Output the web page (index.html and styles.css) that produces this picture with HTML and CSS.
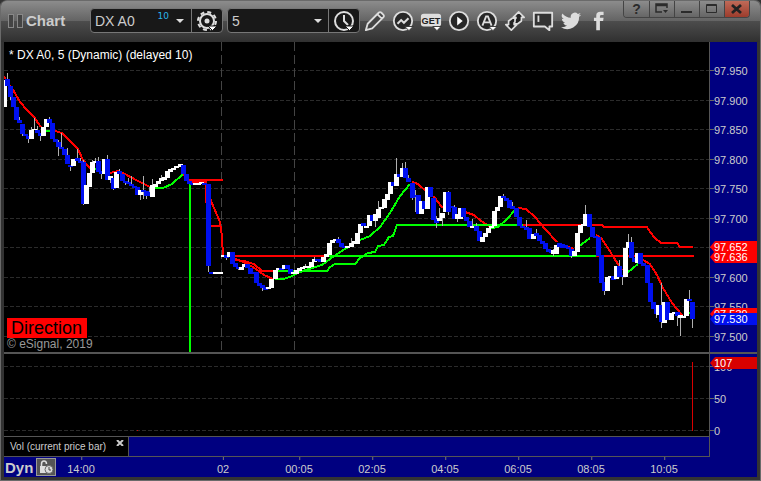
FILE: index.html
```
<!DOCTYPE html>
<html lang="en">
<head>
    <meta charset="UTF-8">
    <meta name="viewport" content="width=device-width, initial-scale=1.0">
    <link rel="stylesheet" href="styles.css">
    <title>Chart</title>
</head>
<body>
    <div class="window">
        <header class="toolbar">
            <div class="brand"><span class="grip"></span><span class="grip"></span><h1>Chart</h1></div>
            <div class="combo">
                <input class="symbol" type="text" value="DX A0" aria-label="Symbol">
                <span class="delay">10</span>
                <button class="drop" aria-label="Symbol list"><svg width="8" height="4" viewBox="0 0 8 4"><path d="M0 0h8L4 4z" fill="#ddd"/></svg></button>
                <button class="combo-icon" aria-label="Settings">
                    <svg width="24" height="24" viewBox="0 0 24 24" fill="none" stroke="#ddd"><circle cx="12" cy="12" r="7" stroke-width="2"/><circle cx="12" cy="12" r="9" stroke-width="2" stroke-dasharray="4 3.07"/><circle cx="12" cy="12" r="2.5" fill="#ddd" stroke="none"/><path d="M13 17h9l-4.500 4.500z" fill="#fff" stroke="#181818"/></svg>
                </button>
            </div>
            <div class="combo">
                <select class="interval" aria-label="Interval"><option>5</option></select>
                <button class="combo-icon" aria-label="Time template">
                    <svg width="24" height="24" viewBox="0 0 24 24" fill="none" stroke="#ddd" stroke-width="2"><circle cx="12" cy="12" r="9"/><path d="M12 6v6l4 4"/><path d="M13 17h9l-4.500 4.500z" fill="#fff" stroke="#181818" stroke-width="1"/></svg>
                </button>
            </div>
            <nav class="tools">
                <button aria-label="Draw"><svg viewBox="0 0 24 24" fill="#444" stroke="#ddd" stroke-width="2" stroke-linejoin="round"><path d="M2 22l2-7L16 3q1.500-1.500 3 0l2 2q1.500 1.500 0 3L9 20zM15 5l4.500 4.500"/></svg></button>
                <button aria-label="Studies"><svg viewBox="0 0 24 24" fill="none" stroke="#ddd" stroke-width="2"><circle cx="12" cy="12" r="10" fill="#282828"/><path d="M6 15l4-4 3 3 5-5" stroke-width="2.200"/><path d="M14 18h9l-4.500 4.500z" fill="#fff" stroke="#333" stroke-width="1"/></svg></button>
                <button aria-label="Advanced GET"><svg viewBox="0 0 24 24"><rect x="1" y="4" width="22" height="14" rx="3" fill="#ddd"/><text class="get" x="12" y="15" text-anchor="middle">GET</text><path d="M14 18h9l-4.500 4.500z" fill="#fff" stroke="#333"/></svg></button>
                <button aria-label="Play"><svg viewBox="0 0 24 24"><circle cx="12" cy="12" r="10" fill="#282828" stroke="#ddd" stroke-width="2"/><path d="M10 7l6 5-6 5z" fill="#fff"/></svg></button>
                <button aria-label="Alerts"><svg viewBox="0 0 24 24" fill="none" stroke="#ddd" stroke-width="2"><circle cx="12" cy="12" r="10" fill="#282828"/><path d="M7 17l4-10h2l4 10M9 13.500h6"/><path d="M14 18h9l-4.500 4.500z" fill="#fff" stroke="#333" stroke-width="1"/></svg></button>
                <button aria-label="Trade"><svg viewBox="0 0 24 24" fill="#222" stroke="#ddd" stroke-width="1.800" stroke-linejoin="round"><path d="M16 2l6 6h-3v4l-4 3h-4v-4l2-2V8h-3z"/><path d="M8 22l-6-6h3v-4l4-3h3v4l-1 1v2h3z"/></svg></button>
                <button aria-label="Notes"><svg viewBox="0 0 24 24" fill="#333" stroke="#ddd" stroke-width="2"><path d="M2 3h20v15h-3v4l-5-4H2z" stroke-linejoin="round"/><path d="M7 6v7"/></svg></button>
                <button aria-label="Twitter"><svg viewBox="0 0 24 24" fill="#ddd"><path d="M23 5.100a9 9 0 0 1-2.600.700 4.500 4.500 0 0 0 2-2.500 9 9 0 0 1-2.900 1.100 4.500 4.500 0 0 0-7.700 4.100A12.800 12.800 0 0 1 2.600 3.800 4.500 4.500 0 0 0 4 9.800a4.500 4.500 0 0 1-2-.600c0 2.200 1.500 4 3.600 4.500a4.500 4.500 0 0 1-2 .100 4.500 4.500 0 0 0 4.200 3.100A9 9 0 0 1 1.100 18.800 12.800 12.800 0 0 0 20.800 7.400 9 9 0 0 0 23 5.100z"/></svg></button>
                <button aria-label="Facebook"><svg viewBox="0 0 24 24" fill="#ddd"><path d="M9 22V12H6.500V8.500H9V6q0-4 4.500-4H17v3.500h-2.500q-1.500 0-1.500 1.500v1.500h4l-.500 3.500H13v10z"/></svg></button>
            </nav>
            <div class="window-buttons">
                <button aria-label="Help">?</button>
                <button aria-label="Dock"><svg width="14" height="12" viewBox="0 0 14 12" fill="none" stroke="#2b2b2b" stroke-width="1.500"><path d="M7 9H1V1h11v4M1 2.500h11"/><path d="M8 7h5l-2.500 3z" fill="#2b2b2b" stroke="none"/></svg></button>
                <button aria-label="Minimize"><svg width="14" height="12" viewBox="0 0 14 12"><path d="M1 8h11v2H1z" fill="#2b2b2b"/></svg></button>
                <button aria-label="Maximize"><svg width="14" height="12" viewBox="0 0 14 12" fill="none" stroke="#2b2b2b"><path d="M1.500 1.500h10v8h-10zM1 2.500h11"/></svg></button>
                <button class="close" aria-label="Close"><svg width="14" height="12" viewBox="0 0 14 12"><path d="M2 2l9 8M11 2l-9 8" stroke="#222" stroke-width="2.800"/></svg></button>
            </div>
        </header>

        <main class="workspace">
            <section class="plot price-plot">
                <svg id="priceChart" viewBox="4 42 705 310" preserveAspectRatio="none" shape-rendering="crispEdges">
                    <g id="priceGrid" class="grid-line"></g>
                    <path class="session" d="M221.500 42V352M294.500 42V352"/>
                    <!-- moving average -->
                    <path class="line red" d="M4 76L7 82 12 88 20 102 27 110 34 117 38 123 41 127M55 131L62 133 70 141 78 149 83 160 88 166 91 169M110 173L118 171 125 174 136 180 150 187M183 174L188 180M206 183L211 201 220 222 222 237 223 256M235 259L246 263 256 269 264 275 273 279M412 182L418 184 427 192 435 198 441 206 447 210M458 210L468 213 474 215 481 221 486 224 491 227M518 208L526 209 535 217 545 229 557 242M565 246L574 249M596 235L601 238 608 248 614 258 622 270M643 260L650 264 657 275 663 288 672 303 682 315"/>
                    <path class="line green" d="M44 131H52M94 169H98M152 188H163L172 184 183 174M275 279H283L290 277 300 272 312 268 322 265 330 259 340 252 350 246 360 240 370 236 380 227 390 213 400 196 410 184M491 228L498 227 507 219 515 210M578 247L590 238M627 273L638 264M687 313H690"/>
                    <!-- trailing levels -->
                    <path class="line red" d="M189 180H223M192 182H206V203M211 226H221M223 256H325M235 260L244 261 254 264 262 271H275M523 225H602L604 227H647L650 232 655 238 661 243H677L680 247H693M596 256H694"/>
                    <path class="line green" d="M190 181V352M325 256H596M275 271H327L330 267 335 264H355L360 258 368 253 375 252 378 246 384 245 389 237 393 236 397 225H523"/>
                    <g id="candles"></g>
                </svg>
                <p class="caption">* DX A0, 5 (Dynamic) (delayed 10)</p>
                <div class="signal">
                    <span class="direction">Direction</span>
                    <span class="copyright">© eSignal, 2019</span>
                </div>
            </section>
            <aside class="scale" id="priceScale"></aside>

            <section class="plot volume-plot">
                <svg viewBox="4 354 705 82" preserveAspectRatio="none" shape-rendering="crispEdges">
                    <path class="grid-line" d="M4 366.500H709M4 398.500H709M4 430.500H709"/>
                    <path d="M692 362h1v69h-1zM137 430h1v1h-1z" fill="#d80000"/>
                </svg>
            </section>
            <aside class="scale volume-scale" id="volumeScale"></aside>

            <div class="tabs">
                <div class="tab">Vol (current price bar)<button aria-label="Close study"><svg width="8" height="6" viewBox="0 0 8 6"><path d="M1 0l6 6M7 0L1 6" stroke="#ccc" stroke-width="2"/></svg></button></div>
            </div>
            <div class="scale"></div>

            <footer class="time-axis" id="timeAxis">
                <span class="mode">Dyn</span>
                <button class="lock" aria-label="Lock time"><svg width="16" height="14" viewBox="0 0 16 14"><path d="M3.500 6V4q0-3 2.500-3t2.500 3" fill="none" stroke="#ddd" stroke-width="1.500"/><path d="M2 6h7v7H2z" fill="#ddd"/><circle cx="11" cy="9.500" r="4" fill="#ddd" stroke="#666"/><path d="M11 7v3h2" fill="none" stroke="#444"/></svg></button>
            </footer>
        </main>
    </div>
    <script src="chart.js"></script>
</body>
</html>
```
FILE: styles.css
```
* {
    box-sizing: border-box;
}

body {
    font-family: "Liberation Sans", Arial, sans-serif;
    background-color: #333;
    color: #ccc;
    margin: 0;
}

button {
    display: flex;
    align-items: center;
    justify-content: center;
    padding: 0;
    border: none;
    background: none;
    color: inherit;
    font-family: inherit;
    cursor: pointer;
}

h1, p {
    margin: 0;
}

.window {
    display: flex;
    flex-direction: column;
    min-height: 100vh;
    padding: 0 4px 4px;
    background-color: #333;
    border-radius: 6px 6px 0 0;
    box-shadow: inset 1px -1px #6a6a6a, inset -1px 0 #6a6a6a;
}

/* toolbar */
.toolbar {
    display: flex;
    align-items: center;
    height: 42px;
    margin: 0 -3px;
    padding: 0 10px 2px 7px;
    border-top: 1px solid #6a6a6a;
    border-radius: 6px 6px 0 0;
    background: linear-gradient(#8c8c8c, #646464 48%, #4c4c4c 50%, #303030);
}

.brand {
    display: flex;
    align-items: center;
    gap: 3px;
    width: 82px;
}

.grip {
    width: 6px;
    height: 14px;
    border: 1px solid #888;
    background-color: #444;
}

h1 {
    font-size: 15px;
    color: #ccc;
}

.combo {
    display: flex;
    width: 133px;
    height: 25px;
    margin-right: 4px;
    border: 1px solid #777;
    border-radius: 4px;
    background-color: #181818;
}

.symbol, .interval {
    flex: 1;
    min-width: 0;
    padding: 0 4px;
    border: none;
    background: none;
    color: #ccc;
    font-family: inherit;
    font-size: 14px;
}

.interval {
    appearance: none;
    background: url("data:image/svg+xml,%3Csvg xmlns='http://www.w3.org/2000/svg' width='8' height='4'%3E%3Cpath d='M0 0h8L4 4z' fill='%23ddd'/%3E%3C/svg%3E") no-repeat right 6px center;
}

.delay {
    padding-top: 2px;
    color: #29b6e8;
    font-family: "DejaVu Sans", sans-serif;
    font-size: 9px;
}

.drop {
    width: 22px;
}

.combo-icon {
    width: 31px;
    border-left: 1px solid #777;
}

.tools {
    display: flex;
    margin-left: -3px;
}

.tools button {
    width: 28px;
    height: 28px;
}

.tools svg {
    width: 22px;
    height: 22px;
}

.get {
    font-family: "Liberation Sans", Arial, sans-serif;
    font-size: 10px;
    font-weight: bold;
    fill: #222;
}

.window-buttons {
    display: flex;
    align-self: flex-start;
    margin-left: auto;
    border: 1px solid #444;
    border-top: none;
    border-radius: 0 0 4px 4px;
    overflow: hidden;
}

.window-buttons button {
    width: 25px;
    height: 16px;
    background: linear-gradient(#8c8c8c, #666);
    color: #2b2b2b;
    font-size: 14px;
    font-weight: bold;
}

.window-buttons button + button {
    border-left: 1px solid #444;
}

.window-buttons .close {
    background: linear-gradient(#c06a58, #9c3c2c);
}

/* chart area */
.workspace {
    flex: 1;
    display: grid;
    grid-template-columns: 1fr 48px;
    grid-template-rows: 1fr 84px 21px 20px;
}

.plot {
    position: relative;
    min-height: 0;
    background-color: #000;
}

.plot > svg {
    display: block;
    width: 100%;
    height: 100%;
}

.price-plot > svg {
    position: absolute;
}

.volume-plot, .volume-scale {
    border-top: 2px solid #555;
}

.scale {
    position: relative;
    border-left: 1px solid #555;
    background-color: #000080;
    font-size: 11px;
}

.grid-line, .session {
    fill: none;
    stroke: #2b2b2b;
    stroke-dasharray: 4 2;
}

.session {
    stroke: #444;
    stroke-dasharray: 9 4;
}

.line {
    fill: none;
    stroke-width: 2;
}

.red {
    stroke: #f00;
}

.green {
    stroke: #0f0;
}

.wick {
    fill: #b0b0b0;
}

.up {
    fill: #fff;
}

.down {
    fill: #0010f0;
}

.caption {
    position: absolute;
    top: 6px;
    left: 5px;
    color: #fff;
    font-size: 12px;
    line-height: 14px;
}

.signal {
    position: absolute;
    bottom: 2px;
    left: 3px;
    display: flex;
    flex-direction: column;
    align-items: flex-start;
}

.direction {
    padding: 0 5px 0 4px;
    background-color: #f00;
    color: #000;
    font-size: 18px;
    line-height: 20px;
}

.copyright {
    color: #999;
    font-size: 12px;
    line-height: 12px;
}

/* scale labels, placed by value */
.label, .tag {
    position: absolute;
    left: 0;
    height: 12px;
    padding-left: 4px;
    line-height: 12px;
    transform: translateY(-50%);
}

.label::before {
    content: "";
    position: absolute;
    top: 5px;
    left: 0;
    width: 4px;
    height: 1px;
    background-color: #666;
}

.tag {
    right: 0;
    color: #fff;
    background-color: #f00;
    clip-path: polygon(0 50%, 5px 0, 100% 0, 100% 100%, 5px 100%);
}

.tag.last {
    background-color: #0010f0;
}

.tag.volume {
    background-color: #d80000;
}

/* study tabs */
.tabs {
    display: flex;
    border-top: 1px solid #555;
    border-bottom: 1px solid #555;
    background-color: #000080;
}

.tab {
    display: flex;
    align-items: center;
    gap: 10px;
    padding: 0 4px 0 6px;
    border-right: 1px solid #555;
    background-color: #000;
    font-size: 10px;
}

.tab button {
    align-self: flex-start;
    margin-top: 3px;
}

/* time axis */
.time-axis {
    grid-column: 1 / -1;
    position: relative;
    display: flex;
    align-items: center;
    gap: 3px;
    padding-left: 1px;
    background-color: #000080;
    font-size: 11px;
}

.mode {
    font-size: 15px;
    font-weight: bold;
}

.lock {
    width: 20px;
    height: 18px;
    border: 1px solid #999;
    background-color: #555;
}

.time {
    position: absolute;
    top: 0;
    padding-top: 6px;
    line-height: 13px;
    transform: translateX(-50%);
}

.time::before {
    content: "";
    position: absolute;
    top: 0;
    left: 50%;
    width: 1px;
    height: 3px;
    background-color: #777;
}
```
FILE: chart.js
```
// x, direction, body top, body bottom, high, low
const candles = [
    [4, 'u', 80, 107], [7, 'd', 79, 86, 73], [10, 'd', 86, 97, 86, 100], [13, 'd', 97, 107], [16, 'd', 107, 120],
    [19, 'd', 120, 123, 117], [22, 'd', 124, 134, 124, 136], [25, 'd', 134, 136], [28, 'd', 136, 139, 136, 143], [31, 'u', 130, 139, 127],
    [34, 'u', 129, 130, 118], [37, 'd', 130, 133, 126], [40, 'd', 133, 136, 133, 141], [43, 'u', 127, 136], [46, 'u', 119, 127],
    [49, 'd', 119, 123, 117], [52, 'd', 123, 139], [55, 'd', 139, 142], [58, 'd', 142, 147, 140, 156], [61, 'd', 147, 149, 133],
    [64, 'd', 149, 155], [67, 'd', 155, 164, 148], [70, 'd', 165, 167, 165, 171], [73, 'u', 159, 166], [77, 'd', 158, 161, 149],
    [80, 'd', 161, 163, 158], [83, 'd', 162, 204, 160, 205], [86, 'u', 185, 204], [89, 'u', 173, 187], [92, 'u', 162, 173, 160],
    [95, 'u', 161, 163, 158], [98, 'd', 161, 172, 157], [101, 'd', 171, 174, 171, 179], [104, 'u', 159, 174], [107, 'd', 159, 180, 155],
    [110, 'u', 176, 180, 176, 183], [113, 'd', 178, 189, 178, 190], [116, 'u', 172, 188], [119, 'd', 171, 174, 169], [122, 'd', 174, 181],
    [125, 'd', 181, 183, 181, 185], [128, 'd', 182, 184, 178], [131, 'd', 184, 186, 176], [134, 'd', 186, 188], [137, 'd', 187, 195],
    [140, 'u', 190, 195, 190, 200], [143, 'd', 190, 192, 176, 199], [146, 'd', 191, 196, 191, 199], [149, 'd', 192, 196, 187], [152, 'u', 185, 197, 179],
    [155, 'u', 184, 187], [158, 'u', 181, 184], [161, 'u', 178, 181, 175], [164, 'u', 177, 180], [167, 'u', 171, 178],
    [170, 'u', 169, 172], [173, 'u', 168, 170], [176, 'u', 166, 168], [180, 'u', 164, 167], [183, 'd', 165, 174],
    [186, 'd', 174, 181], [189, 'd', 181, 184], [192, 'd', 183, 185], [195, 'u', 183, 185], [198, 'u', 183, 185],
    [201, 'u', 182, 184], [204, 'd', 183, 185], [208, 'd', 184, 266, 184, 272], [211, 'd', 272, 274], [215, 'u', 272, 274],
    [218, 'u', 272, 274], [220, 'u', 272, 274], [223, 'u', 255, 257], [226, 'd', 255, 258, 255, 260], [229, 'u', 252, 257],
    [232, 'd', 252, 264], [235, 'd', 263, 267], [238, 'd', 267, 269, 267, 270], [241, 'u', 267, 270], [244, 'u', 264, 267],
    [247, 'd', 264, 268], [250, 'd', 268, 274], [253, 'd', 272, 274], [256, 'd', 272, 283], [259, 'd', 283, 286],
    [262, 'd', 285, 288, 285, 291], [265, 'd', 287, 290], [268, 'u', 287, 289], [271, 'u', 279, 288], [275, 'u', 270, 279],
    [278, 'u', 268, 270], [281, 'd', 268, 270], [284, 'u', 265, 269], [287, 'd', 265, 269], [290, 'd', 269, 274],
    [293, 'u', 272, 274], [296, 'u', 270, 274], [299, 'u', 268, 271], [302, 'u', 267, 269], [305, 'u', 266, 268, 264],
    [308, 'u', 266, 268], [311, 'u', 262, 267], [314, 'u', 259, 262, 257], [317, 'd', 259, 261], [320, 'd', 259, 262],
    [323, 'u', 257, 262], [326, 'u', 254, 257], [329, 'u', 243, 255], [332, 'u', 240, 243], [335, 'u', 239, 241],
    [338, 'd', 239, 243, 237], [341, 'd', 243, 247], [344, 'd', 246, 248], [347, 'u', 246, 248], [351, 'u', 243, 247, 238],
    [354, 'u', 241, 244], [357, 'u', 233, 244], [360, 'u', 224, 233], [363, 'd', 223, 226], [366, 'u', 226, 228],
    [369, 'u', 215, 226], [372, 'd', 215, 221], [375, 'u', 214, 221, 214, 227], [378, 'u', 209, 218, 201], [381, 'u', 207, 209],
    [384, 'u', 199, 208], [387, 'u', 194, 200], [390, 'u', 182, 194], [393, 'd', 182, 186], [396, 'u', 174, 186, 158],
    [399, 'd', 174, 177], [402, 'u', 168, 177, 163], [405, 'd', 168, 178, 162], [408, 'd', 178, 182, 175], [412, 'd', 183, 198, 183, 200],
    [415, 'd', 195, 197, 190, 212], [418, 'd', 195, 214], [421, 'u', 201, 214], [424, 'd', 201, 209], [427, 'u', 187, 209],
    [430, 'd', 187, 197], [433, 'd', 198, 220], [436, 'd', 219, 223, 216, 228], [439, 'u', 218, 221, 208], [442, 'u', 213, 218, 213, 226],
    [445, 'u', 192, 212], [448, 'd', 192, 212, 191, 215], [451, 'd', 206, 208], [454, 'd', 207, 219, 205], [457, 'u', 214, 219, 214, 222],
    [460, 'u', 208, 219], [463, 'd', 208, 217], [466, 'd', 217, 221], [469, 'd', 221, 227], [472, 'u', 226, 228, 219],
    [476, 'd', 226, 231, 223], [479, 'd', 231, 241], [482, 'u', 237, 242], [485, 'u', 233, 237], [488, 'u', 228, 233],
    [491, 'u', 226, 228], [494, 'u', 211, 226], [497, 'u', 207, 211], [500, 'u', 196, 207], [503, 'd', 196, 198, 194],
    [506, 'd', 198, 201], [509, 'd', 200, 208], [512, 'd', 206, 209, 202], [516, 'd', 208, 217], [519, 'd', 217, 226],
    [522, 'd', 226, 228], [526, 'd', 227, 230, 220], [529, 'd', 228, 239], [533, 'u', 234, 239], [536, 'd', 233, 236, 229],
    [539, 'd', 235, 241], [542, 'd', 241, 244], [545, 'd', 243, 249], [548, 'd', 249, 252], [551, 'd', 251, 253],
    [553, 'u', 250, 254, 249, 256], [556, 'u', 245, 254], [559, 'd', 243, 247], [562, 'd', 244, 248], [565, 'd', 245, 248],
    [568, 'd', 247, 249], [571, 'd', 249, 256, 249, 258], [574, 'u', 251, 256], [577, 'u', 233, 252], [580, 'u', 225, 233],
    [583, 'u', 224, 226], [585, 'u', 214, 226, 205], [589, 'd', 214, 227], [592, 'd', 227, 237], [595, 'd', 236, 238],
    [598, 'd', 237, 256], [601, 'd', 255, 283], [604, 'd', 282, 291, 282, 295], [607, 'u', 277, 291], [610, 'u', 276, 278],
    [613, 'd', 276, 280], [616, 'u', 266, 279], [619, 'd', 266, 277, 260], [622, 'd', 275, 277, 275, 285], [625, 'u', 248, 277],
    [628, 'u', 242, 248, 234], [631, 'd', 242, 258, 237], [634, 'd', 258, 262], [637, 'u', 253, 263], [640, 'd', 253, 264],
    [643, 'd', 263, 266], [647, 'd', 265, 283], [650, 'd', 283, 302], [653, 'd', 302, 309], [656, 'd', 308, 314, 308, 318],
    [658, 'u', 305, 315], [661, 'd', 305, 322, 283, 328], [664, 'u', 302, 323], [667, 'd', 302, 320], [671, 'u', 313, 320],
    [674, 'u', 312, 314], [677, 'd', 312, 316, 312, 326], [680, 'u', 315, 318, 315, 336], [683, 'u', 316, 318], [686, 'u', 299, 316],
    [689, 'd', 299, 301, 290], [692, 'd', 302, 319, 302, 328]
];

const prices = [97.95, 97.9, 97.85, 97.8, 97.75, 97.7, 97.65, 97.6, 97.55, 97.5];
const priceTags = [[97.652, ''], [97.636, ''], [97.539, ''], [97.53, 'last']];
const times = [[81, '14:00'], [223, '02'], [299, '00:05'], [372, '02:05'], [445, '04:05'], [518, '06:05'], [591, '08:05'], [664, '10:05']];

function priceY(price) {
    return Math.round(336 - (price - 97.5) * 591);
}

function rect(x, y, width, height, cls) {
    return `<rect class="${cls}" x="${x}" y="${y}" width="${width}" height="${height}"/>`;
}

function addLabel(parent, text, cls, prop, percent) {
    const el = document.createElement('span');
    el.className = cls;
    el.textContent = text;
    el.style[prop] = percent + '%';
    parent.appendChild(el);
}

// wicks go under all the bodies
const wicks = candles.map(([x, dir, top, bottom, high = top, low = bottom]) => rect(x, high, 1, low - high, 'wick'));
const bodies = candles.map(([x, dir, top, bottom]) => rect(x - 2, top, 5, bottom - top, dir === 'u' ? 'up' : 'down'));
document.getElementById('candles').innerHTML = wicks.concat(bodies).join('');

document.getElementById('priceGrid').innerHTML = prices.map(p =>
    `<path d="M4 ${priceY(p) + 0.5}H709"/>`
).join('');

const priceScale = document.getElementById('priceScale');
prices.forEach(p => addLabel(priceScale, p.toFixed(3), 'label', 'top', (priceY(p) - 41) / 3.1));
priceTags.forEach(([p, cls]) => addLabel(priceScale, p.toFixed(3), 'tag ' + cls, 'top', (priceY(p) - 41) / 3.1));

const volumeScale = document.getElementById('volumeScale');
[100, 50, 0].forEach(v => addLabel(volumeScale, v, 'label', 'top', (77 - v * 0.64) / 0.82));
addLabel(volumeScale, 107, 'tag volume', 'top', 9 / 0.82);

const timeAxis = document.getElementById('timeAxis');
times.forEach(([x, text]) => addLabel(timeAxis, text, 'time', 'left', (x - 4) / 7.53));
```
